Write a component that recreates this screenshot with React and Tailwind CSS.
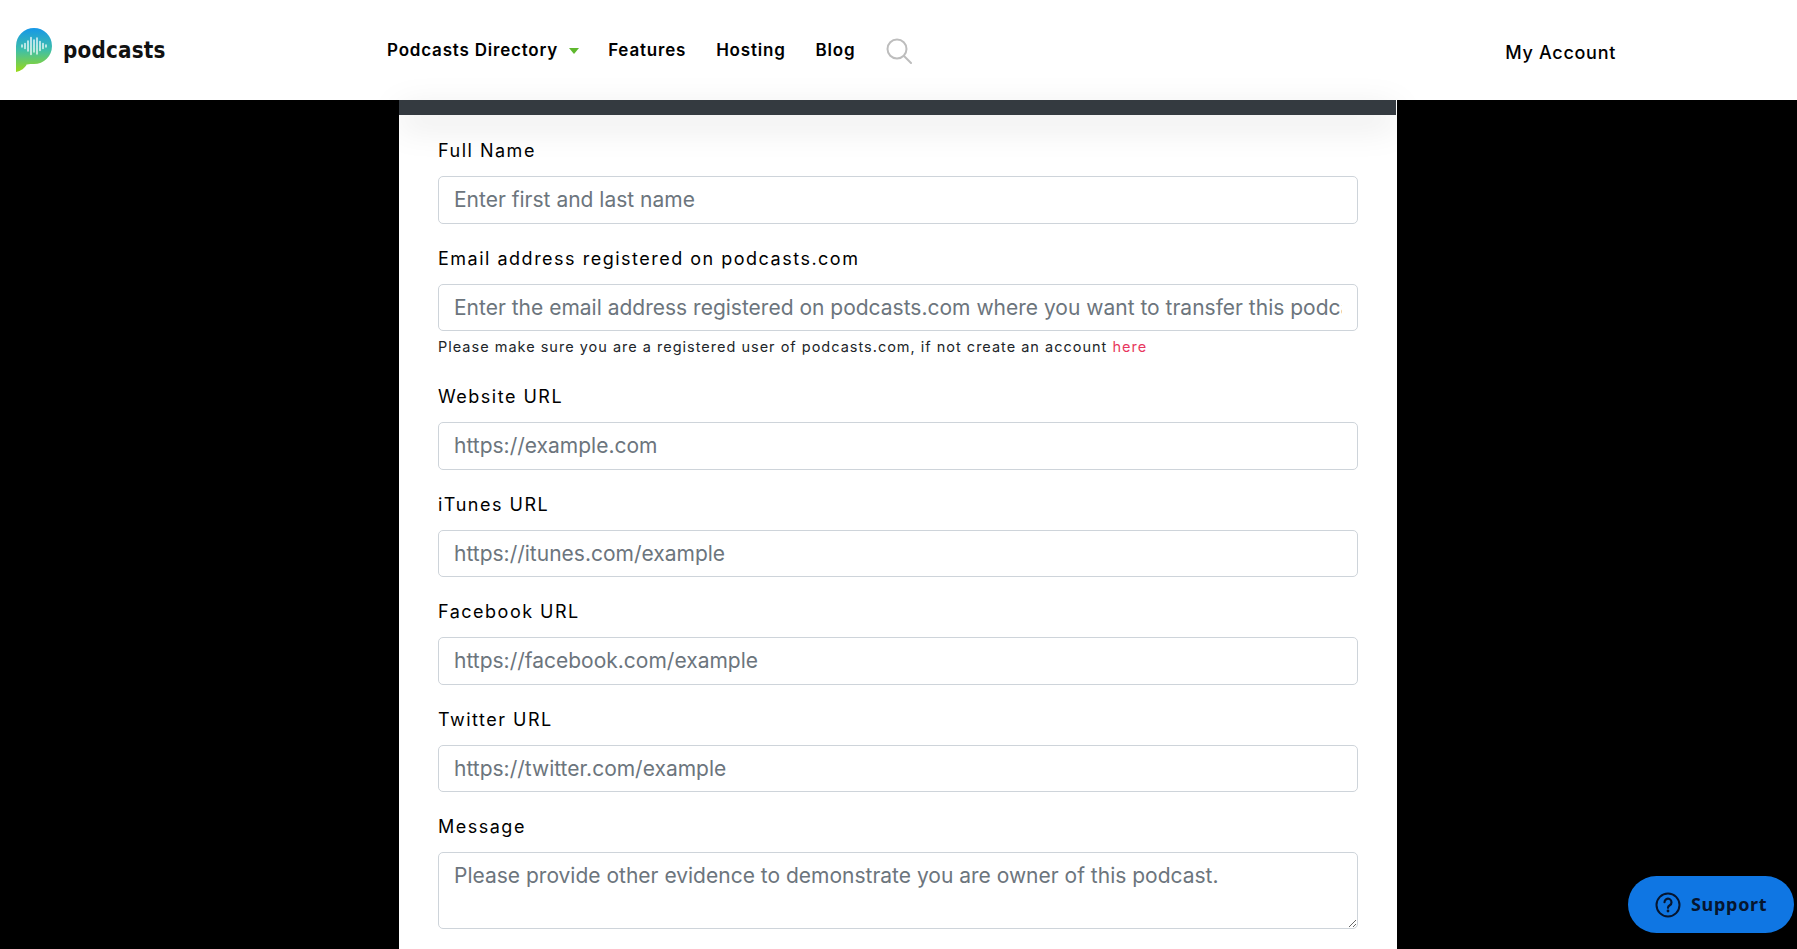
import React from 'react';

const font = "font-['Inter','Liberation_Sans',sans-serif]";

const Logo = () => (
    <div className="flex items-center w-[165px] h-[44px]">
        <svg width="37" height="44" viewBox="0 0 37 44" className="shrink-0">
            <defs>
                <linearGradient id="logoGrad" x1="0" y1="0" x2="0" y2="1">
                    <stop offset="0" stopColor="#1697e8" />
                    <stop offset="0.5" stopColor="#3fbfa8" />
                    <stop offset="1" stopColor="#9ad916" />
                </linearGradient>
            </defs>
            <path d="M0 18a18 18 0 1 1 18 18c-2 0-5 0-7 .5V36C9 40 5 43 0 44Z" fill="url(#logoGrad)" />
            <g stroke="#fff" strokeWidth="1.300" strokeLinecap="round">
                <path d="M6 17v2M9 15.500v5M12 13v10M15 9.500v17M18 12v12M21 10v16M24 13.500v9M27 15.500v5M30 17v2" />
            </g>
        </svg>
        <span className="ml-[10px] inline-block scale-y-[1.15] font-['DejaVu_Sans',sans-serif] font-bold text-[20px] leading-none tracking-[0.2px] text-[#111]">
            podcasts
        </span>
    </div>
);

const NavItem = ({ children, className = '' }) => (
    <a className={`text-[17px] font-semibold tracking-[0.8px] text-black ${className}`}>{children}</a>
);

const Header = () => (
    <header className={`h-[100px] shrink-0 bg-white flex items-center ${font}`}>
        <div className="ml-[16px]">
            <Logo />
        </div>
        <nav className="ml-[206px] mt-[2px] flex items-center">
            <NavItem>Podcasts Directory</NavItem>
            <span className="ml-[11px] w-0 h-0 border-l-[5px] border-r-[5px] border-t-[6px] border-l-transparent border-r-transparent border-t-[#5fb82e]" />
            <NavItem className="ml-[29px]">Features</NavItem>
            <NavItem className="ml-[30px]">Hosting</NavItem>
            <NavItem className="ml-[30px]">Blog</NavItem>
            <svg width="26" height="26" viewBox="0 0 26 26" fill="none" stroke="#bdbdbd" strokeWidth="2" strokeLinecap="round" className="ml-[31px]">
                <circle cx="11" cy="11" r="9.500" />
                <path d="M18 18l7 7" />
            </svg>
        </nav>
        <a className="ml-auto mr-[181px] mt-[5px] text-[18px] font-medium tracking-[0.7px] text-black">My Account</a>
    </header>
);

const labelClass = "block h-[46px] pt-[7px] text-[18px] leading-[28px] tracking-[1.5px] text-black";
const inputClass = "block w-full h-[47.5px] px-[15px] rounded-[5px] border border-[#ced4da] bg-white text-[21px] text-[#495057] placeholder:text-[#6c757d] outline-none";

const Field = ({ label, placeholder, help }) => (
    <div className="mb-[14px]">
        <label className={labelClass}>{label}</label>
        <input type="text" placeholder={placeholder} className={inputClass} />
        {help}
    </div>
);

const App = () => {
    return (
        <div className={`h-screen overflow-hidden flex flex-col bg-black ${font}`}>
            <Header />
            <main className="flex-1 flex justify-center pr-[1px]">
                <div className="w-[998px] bg-white border-r border-white">
                    <div className="h-[15px] bg-[#343a40] shadow-[0_10px_35px_rgba(0,0,0,0.13)]" />
                    <form className="pl-[39px] pr-[38px] pt-[15px]">
                        <Field label="Full Name" placeholder="Enter first and last name" />
                        <Field
                            label="Email address registered on podcasts.com"
                            placeholder="Enter the email address registered on podcasts.com where you want to transfer this podcast"
                            help={
                                <p className="h-[23px] mt-[8px] text-[14.500px] leading-[16px] tracking-[1px] text-[#212529]">
                                    Please make sure you are a registered user of podcasts.com, if not create an account{' '}
                                    <a className="text-[#e8365d]">here</a>
                                </p>
                            }
                        />
                        <Field label="Website URL" placeholder="https://example.com" />
                        <Field label="iTunes URL" placeholder="https://itunes.com/example" />
                        <Field label="Facebook URL" placeholder="https://facebook.com/example" />
                        <Field label="Twitter URL" placeholder="https://twitter.com/example" />
                        <div>
                            <label className={labelClass}>Message</label>
                            <textarea
                                placeholder="Please provide other evidence to demonstrate you are owner of this podcast."
                                className="block w-full h-[77px] px-[15px] py-[7px] rounded-[5px] border border-[#ced4da] bg-white text-[21px] placeholder:text-[#6c757d] outline-none"
                            />
                        </div>
                    </form>
                </div>
            </main>
            <button className="fixed left-[1628px] top-[876px] w-[166px] h-[57px] rounded-[28.500px] bg-[#0f76e3] flex items-center pl-[27px] text-[#06152e]">
                <svg width="26" height="26" viewBox="0 0 26 26" fill="none">
                    <circle cx="13" cy="13" r="11.500" stroke="currentColor" strokeWidth="2" />
                    <path d="M9.500 10.200a3.500 3.500 0 1 1 5.300 3c-1.300.8-1.800 1.400-1.800 2.600" stroke="currentColor" strokeWidth="2.200" strokeLinecap="round" />
                    <circle cx="13" cy="19" r="1.400" fill="currentColor" />
                </svg>
                <span className="ml-[10px] font-['Noto_Sans',sans-serif] font-bold text-[18px] tracking-[0.7px]">Support</span>
            </button>
        </div>
    );
};

export default App;
